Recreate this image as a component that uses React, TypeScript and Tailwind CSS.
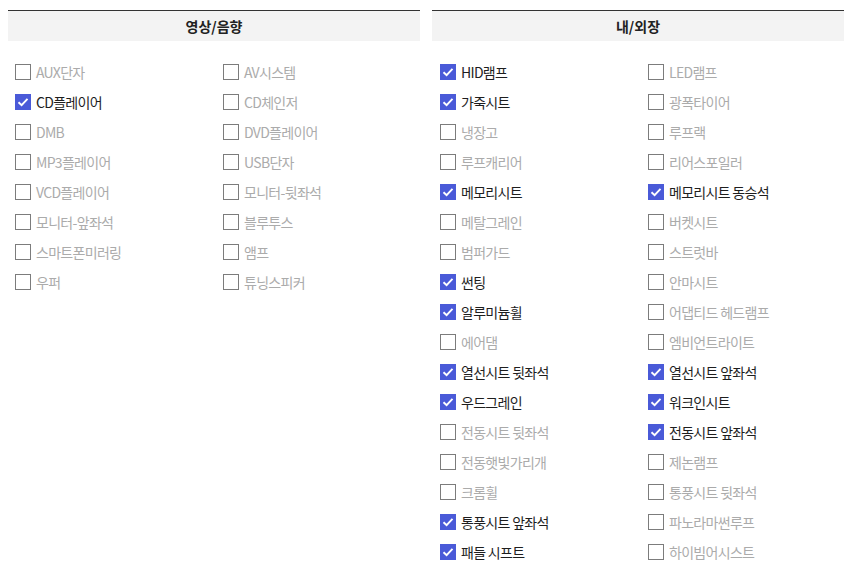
import React from 'react';

type Option = { label: string; checked: boolean };

const av: Option[] = [
  { label: 'AUX단자', checked: false },
  { label: 'AV시스템', checked: false },
  { label: 'CD플레이어', checked: true },
  { label: 'CD체인저', checked: false },
  { label: 'DMB', checked: false },
  { label: 'DVD플레이어', checked: false },
  { label: 'MP3플레이어', checked: false },
  { label: 'USB단자', checked: false },
  { label: 'VCD플레이어', checked: false },
  { label: '모니터-뒷좌석', checked: false },
  { label: '모니터-앞좌석', checked: false },
  { label: '블루투스', checked: false },
  { label: '스마트폰미러링', checked: false },
  { label: '앰프', checked: false },
  { label: '우퍼', checked: false },
  { label: '튜닝스피커', checked: false },
];

const interior: Option[] = [
  { label: 'HID램프', checked: true },
  { label: 'LED램프', checked: false },
  { label: '가죽시트', checked: true },
  { label: '광폭타이어', checked: false },
  { label: '냉장고', checked: false },
  { label: '루프랙', checked: false },
  { label: '루프캐리어', checked: false },
  { label: '리어스포일러', checked: false },
  { label: '메모리시트', checked: true },
  { label: '메모리시트 동승석', checked: true },
  { label: '메탈그레인', checked: false },
  { label: '버켓시트', checked: false },
  { label: '범퍼가드', checked: false },
  { label: '스트럿바', checked: false },
  { label: '썬팅', checked: true },
  { label: '안마시트', checked: false },
  { label: '알루미늄휠', checked: true },
  { label: '어댑티드 헤드램프', checked: false },
  { label: '에어댐', checked: false },
  { label: '엠비언트라이트', checked: false },
  { label: '열선시트 뒷좌석', checked: true },
  { label: '열선시트 앞좌석', checked: true },
  { label: '우드그레인', checked: true },
  { label: '워크인시트', checked: true },
  { label: '전동시트 뒷좌석', checked: false },
  { label: '전동시트 앞좌석', checked: true },
  { label: '전동햇빛가리개', checked: false },
  { label: '제논램프', checked: false },
  { label: '크롬휠', checked: false },
  { label: '통풍시트 뒷좌석', checked: false },
  { label: '통풍시트 앞좌석', checked: true },
  { label: '파노라마썬루프', checked: false },
  { label: '패들 시프트', checked: true },
  { label: '하이빔어시스트', checked: false },
];

const CheckItem = ({ opt }: { opt: Option }) => (
  <label className="flex h-[30px] items-center gap-[5px]">
    {opt.checked ? (
      <span className="flex h-[16px] w-[16px] items-center justify-center bg-[#4a5ad8]">
        <svg width="12" height="10" viewBox="0 0 12 10">
          <path d="M1.5 5.2 L4.6 8.2 L10.5 1.8" fill="none" stroke="#fff" strokeWidth="1.9" />
        </svg>
      </span>
    ) : (
      <span className="h-[16px] w-[16px] border border-[#7c7c7c] bg-white" />
    )}
    <span className={`text-[14px] tracking-[-0.05em] ${opt.checked ? 'text-[#1e1e1e]' : 'text-[#ababab]'}`}>
      {opt.label}
    </span>
  </label>
);

const Panel = ({ title, items, pad }: { title: string; items: Option[]; pad: string }) => (
  <section className="w-[412px]">
    <div className="flex h-[31px] items-center justify-center border-t border-[#333] bg-[#f3f3f3] text-[14px] font-bold text-[#222]">
      {title}
    </div>
    <div className={`grid grid-cols-[208px_1fr] pt-[16px] ${pad}`}>
      {items.map((o) => (
        <CheckItem key={o.label} opt={o} />
      ))}
    </div>
  </section>
);

export default function App() {
  return (
    <div
      className="flex h-[576px] w-[853px] gap-[12px] bg-white pl-[8px] pt-[10px]"
      style={{ fontFamily: '"Noto Sans CJK KR", "Noto Sans", sans-serif' }}
    >
      <Panel title="영상/음향" items={av} pad="pl-[7px]" />
      <Panel title="내/외장" items={interior} pad="pl-[8px]" />
    </div>
  );
}
